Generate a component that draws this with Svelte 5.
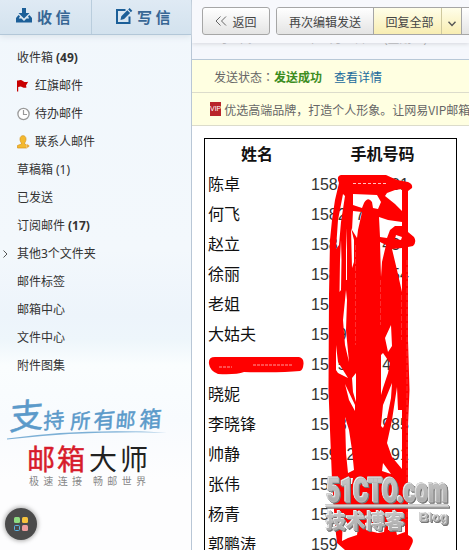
<script>
  // blanks are figure spaces, as wide as one digit
  const contacts = [
    { name: '陈卓', phone: '1582_____01' },
    { name: '何飞', phone: '1582_7' },
    { name: '赵立', phone: '158_____43' },
    { name: '徐丽', phone: '158______54' },
    { name: '老姐', phone: '15' },
    { name: '大姑夫', phone: '15_9' },
    { name: '', phone: '15_5____4' },
    { name: '晓妮', phone: '15' },
    { name: '李晓锋', phone: '15_8____985' },
    { name: '帅静', phone: '159_2____91' },
    { name: '张伟', phone: '15' },
    { name: '杨青', phone: '15' },
    { name: '郭鹏涛', phone: '159_4' }
  ];

  const folders = [
    { label: '收件箱', count: 49, bold: true },
    { label: '红旗邮件', icon: 'flag' },
    { label: '待办邮件', icon: 'clock' },
    { label: '联系人邮件', icon: 'person' },
    { label: '草稿箱', count: 1 },
    { label: '已发送' },
    { label: '订阅邮件', count: 17, bold: true },
    { label: '其他3个文件夹', more: true },
    { label: '邮件标签' },
    { label: '邮箱中心' },
    { label: '文件中心' },
    { label: '附件图集' }
  ];

  const pad = (s) => s.replaceAll('_', '\u2007');
</script>

<div class="page">
  <aside class="side">
    <div class="tabs">
      <div class="tab">
        <svg width="18" height="18" viewBox="0 0 18 18">
          <path d="M7 1h4v5h3.500L9 11.500 3.500 6H7z" fill="#1c5f98" />
          <path d="M3.500 8 1 11v4.500h16V11l-2.500-3-1.500 1.300 1.200 2.200h-2.700L9 14l-2.500-2.500H3.800L5 9.300z" fill="#1c5f98" />
        </svg>
        <span>收 信</span>
      </div>
      <div class="tab second">
        <svg width="18" height="18" viewBox="0 0 18 18">
          <path d="M10.500 3H2v13h12.500V9.500" fill="none" stroke="#1c5f98" stroke-width="2" />
          <path d="M5.500 13l.8-3.700 6-6 2.800 2.800-6 6zM13.200 2.400l1.400-1.400 2.700 2.700-1.400 1.500z" fill="#1c5f98" />
        </svg>
        <span>写 信</span>
      </div>
    </div>
    <ul class="folders">
      {#each folders as f}
        <li>
          <span class="arrow">
            {#if f.more}
              <svg width="5" height="8" viewBox="0 0 5 8"><path d="M.5.5 4 4 .5 7.500" fill="none" stroke="#555" /></svg>
            {/if}
          </span>
          {#if f.icon}
            <span class="ico">
              {#if f.icon === 'flag'}
                <svg width="14" height="14" viewBox="0 0 14 14"><path d="M0 1.500h1.200c2-1 3.500-.5 5 .7 1.400 1 2.800 1 5 .6L9 6.500l.5 2C7 9.500 5 7.800 3.500 7.500L1.200 8v4.500H0z" fill="#c80000" /></svg>
              {:else if f.icon === 'clock'}
                <svg width="14" height="14" viewBox="0 0 14 14"><circle cx="6.500" cy="7" r="5.600" fill="#fff" stroke="#999" stroke-width="1.300" /><path d="M6.500 3v4.500H10" fill="none" stroke="#999" stroke-width="1.200" /></svg>
              {:else}
                <svg width="14" height="14" viewBox="0 0 14 14"><path d="M3 4c0-4.500 6-4.500 6 0 0 2-.8 3-1.400 4v1l2.400 1V13H.5v-2.500L4.500 9V8C3.600 7 3 6 3 4z" fill="#f4b92e" stroke="#d6941b" stroke-width=".7" /><path d="M9.800 8.500 13 11l-3.200 2.500z" fill="#e39a1c" stroke="#fff" stroke-width=".5" /></svg>
              {/if}
            </span>
          {/if}
          <span>{f.label}</span>
          {#if f.count}<span class="count" class:bold={f.bold}>({f.count})</span>{/if}
        </li>
      {/each}
    </ul>
    <svg class="promo" width="191" height="110" viewBox="0 385 191 110">
      <g fill="#5b9aca" stroke="#5b9aca" stroke-width=".5">
        <text transform="translate(9 430) rotate(-5) skewX(-8)" font-size="34">支</text>
        <text transform="translate(43 429) rotate(-5) skewX(-8)" font-size="21">持</text>
        <text transform="translate(70 429) rotate(-4) skewX(-8)" font-size="20">所</text>
        <text transform="translate(93 429) rotate(-5) skewX(-8)" font-size="22">有</text>
        <text transform="translate(115 428) rotate(-3) skewX(-8)" font-size="20">邮</text>
        <text transform="translate(139 428) rotate(-4) skewX(-8)" font-size="22">箱</text>
      </g>
      <path d="M7 438.500Q80 428 167 432.500 80 430.500 7 439.500z" fill="#7db0d6" />
      <text x="27" y="470" font-size="28" textLength="58" fill="#d71c2b" stroke="#d71c2b" stroke-width=".5">邮箱</text>
      <text x="89" y="470" font-size="28" textLength="59" fill="#222">大师</text>
      <text x="29" y="485" font-size="10" textLength="53" fill="#888">极速连接</text>
      <text x="93" y="485" font-size="10" textLength="53" fill="#888">畅邮世界</text>
    </svg>
    <div class="apps"><i></i><i></i><i></i><i></i></div>
  </aside>

  <main>
    <div class="toolbar">
      <button class="btn back">
        <svg width="12" height="10" viewBox="0 0 12 10"><path d="M5.500.5 1 5l4.500 4.500M11 .5 6.500 5 11 9.500" fill="none" stroke="#666" /></svg>返回
      </button>
      <div class="group">
        <button class="edit">再次编辑发送</button>
        <button class="yellow all">回复全部</button>
        <button class="yellow drop" aria-label="more"><svg width="8" height="6" viewBox="0 0 8 6"><path d="M.5.8 4 4.500 7.500.8" fill="none" stroke="#555" stroke-width="1.400" /></svg></button>
        <button class="next" aria-label="next"></button>
      </div>
    </div>
    <div class="meta"><span>时　间：　　　　年　月　日</span><span class="week">(星期三)</span></div>
    <div class="notice">发送状态<span class="colon">：</span><b>发送成功</b><a href="#detail">查看详情</a></div>
    <div class="notice ad"><span class="vip">VIP</span>优选高端品牌，打造个人形象。让网易VIP邮箱</div>
    <div class="table">
      <div class="row head"><span class="name">姓名</span><span class="phone">手机号码</span></div>
      {#each contacts as c}
        <div class="row"><span class="name">{c.name}</span><span class="phone">{pad(c.phone)}</span></div>
      {/each}
    </div>
  </main>

  <svg class="ink" width="469" height="550" viewBox="0 0 469 550">
    <defs>
      <linearGradient id="metal" x1="0" y1="0" x2="0" y2="1">
        <stop offset="0" stop-color="#cfcfcf" />
        <stop offset="1" stop-color="#a2a2a2" />
      </linearGradient>
    </defs>
    <path fill="#f00" d="M215 357H299Q304 358 303.500 364T300 371Q280 373 244 372 236 375 218 374 210 371 209 364 208 357 215 357z" />
    <path d="M253 365h40M219 367h13" stroke="#ff9a9a" stroke-width="1" stroke-dasharray="3 1" />
    <path fill="#f00" fill-rule="evenodd" d="
      M341 175H386L397 180 408 182Q413 184 412 188L408 191V232L414 237Q417 242 413 246L408 247V340L409.500 390 408 425V535Q415 538 412 544L409 550H345L337 543 335 525 332 480 330 430 328.500 390 329 295 330 240 332 220 335 200 339 183Q336 176 341 175z
      M353 194 377 195 381 202 378 209 373 208 372 202Q368 196 364 203L362 208 353 205z
      M387 193 395 190 402 189V211L395 204 385 196z
      M353 211 362 212 358 230 357 238 352 230z
      M379 217 388 220 402 222V226L395 226 390 230 387 238 380 237z
      M396 235 402 237 401 240 395 239z
      M380 242 386 245 382 262 381 277z
      M392 249 402 248V292L397 270z
      M343 194 345 196 341 222 339 245 336 249 338 220z
      M351 228 354 240 354 262 352 268z
      M341 240 341.500 260 341 290 339.500 292 340 260z
      M346 228 347 250 347 280 346 280z
      M346 290 347 300 346 330 349 362 345 345 343 320z
      M336 345 338 362 343 370 348 378 338 373 336 370z
      M352 378 356 373 356 402 353 392z
      M345 384 355 405 355 411 349 400z
      M383 353 390 363 388 373 383 388 381 395V355z
      M391 325 392 346 388 352 385 338z
      M392 383 391 398 387 418 383 428 381 426 383 405z
      M397 387 398 410 402 410V469L392 457 387 443 392 420z
      M345 417 349 430 352 450 354 470 348 473 346 453z
      M383 463 391 474 382 471z
      M345 478 353 478 352 484 346 484z
      M343 517 350 527 358 528 357 535 348 538 342 541z
      M365 523 371 521 373 527 385 524 384 532 378 533 366 530z
      M394 521 405 526V532L397 535z" />
    <path d="M353 183.500h33" stroke="#ffc0c0" stroke-dasharray="3 2" />
    <path d="M355.500 245V345M380.500 280V325M401.500 295V340M407 260V520" stroke="#ff9c9c" stroke-width=".5" stroke-dasharray="5 2" opacity=".6" />

    <g class="mark" fill="url(#metal)">
      <text class="wm" x="327" y="502" font-size="33" textLength="121" lengthAdjust="spacingAndGlyphs">51CTO.com</text>
      <path d="M326 506.500H449" stroke="#c4c4c4" stroke-width="2" />
      <text class="cjk" x="326" y="529" font-size="20" textLength="79">技术博客</text>
      <text class="blog" x="419.500" y="521.500" font-size="13" textLength="29">Blog</text>
    </g>
  </svg>
</div>

<style>
  :global(body) {
    overflow: hidden;
  }
  .page {
    position: relative;
    display: flex;
    width: 469px;
    height: 550px;
    overflow: hidden;
    background: #fff;
    font: 12px 'Noto Sans', 'Noto Sans CJK SC', sans-serif;
    color: #333;
  }
  .side {
    position: relative;
    width: 191px;
    flex: none;
    border-right: 1px solid #b9c7d6;
    background: linear-gradient(#f1f7fc 0, #f3f8fc 250px, #edf4fb 315px, #eef6fb 340px, #fafdfe 365px, #f8fbfe 420px, #fdfdfe 480px);
  }
  .tabs {
    display: flex;
    height: 34px;
    border-bottom: 1px solid #b3c7d8;
    background: linear-gradient(#dfeaf4, #d3e2ee);
    box-shadow: 0 2px 6px #dce4eb;
  }
  .tab {
    display: flex;
    align-items: center;
    width: 76px;
    padding: 0 0 2px 15px;
    gap: 4px;
    font: bold 15px 'Noto Sans CJK SC', sans-serif;
    color: #386795;
    white-space: nowrap;
  }
  .tab.second {
    padding-left: 23px;
    border-left: 1px solid #b9cddd;
  }
  .folders {
    list-style: none;
    margin: 9px 0 0;
    padding: 0;
  }
  .folders li {
    display: flex;
    align-items: center;
    height: 28px;
    line-height: 28px;
  }
  .arrow {
    width: 14px;
    padding-left: 3px;
    line-height: 8px;
  }
  .ico {
    display: flex;
    width: 18px;
  }
  .count {
    margin-left: 3px;
  }
  .bold {
    font-weight: bold;
  }
  .promo {
    display: block;
    margin-top: 5px;
    font-family: 'Noto Sans CJK SC', sans-serif;
  }
  .apps {
    position: absolute;
    left: 5px;
    top: 508px;
    display: grid;
    grid-template-columns: 6px 6px;
    grid-auto-rows: 6px;
    gap: 2px;
    place-content: center;
    width: 32px;
    height: 32px;
    border-radius: 50%;
    background: #4b4b4b;
    box-shadow: 0 0 4px 1px #aaa;
  }
  .apps i {
    border-radius: 1.500px;
    background: #8fdc82;
  }
  .apps i:nth-child(2) {
    background: #f8c33d;
  }
  .apps i:nth-child(3) {
    background: none;
    border: 1px solid #5bb4e5;
  }
  .apps i:nth-child(4) {
    background: #ed9d9d;
  }

  main {
    flex: 1;
    min-width: 0;
    overflow: hidden;
  }
  .toolbar {
    position: relative;
    display: flex;
    box-sizing: border-box;
    height: 43px;
    padding: 7px 0 0 10px;
    gap: 6px;
    background: #f7f8fc;
    box-shadow: 0 1px 4px #d5d7dd;
  }
  button {
    flex: none;
    box-sizing: border-box;
    height: 26px;
    margin: 0;
    padding: 0;
    border: 0;
    background: linear-gradient(#fff, #e4e4e4);
    font: 12px 'Noto Sans CJK SC', sans-serif;
    color: #444;
  }
  .btn {
    display: flex;
    align-items: center;
    justify-content: center;
    gap: 5px;
    width: 68px;
    height: 28px;
    border: 1px solid #a6a6a6;
    border-radius: 3px;
  }
  .group {
    display: flex;
    flex: none;
    height: 26px;
    border: 1px solid #a6a6a6;
    border-radius: 3px;
    overflow: hidden;
  }
  .edit {
    width: 96px;
  }
  .yellow {
    border-left: 1px solid #a6a6a6;
    background: linear-gradient(#fffee9, #f8edb2);
  }
  .all {
    width: 68px;
    padding-left: 4px;
  }
  .drop {
    width: 20px;
    border-left-color: #cfc99f;
  }
  .next {
    width: 30px;
    border-left: 1px solid #a6a6a6;
  }
  .meta {
    display: flex;
    height: 16px;
    overflow: hidden;
    padding-left: 24px;
    border-bottom: 1px solid #b8c8d7;
    background: #f5f7fc;
    line-height: 16px;
    color: #888;
  }
  .meta span {
    margin-top: -12px;
    white-space: nowrap;
  }
  .week {
    margin-left: 18px;
  }
  .notice {
    height: 32px;
    padding-left: 24px;
    border-bottom: 1px solid #dcdccb;
    background: #ffffe1;
    line-height: 33px;
    white-space: nowrap;
    color: #666;
    font-family: 'Noto Sans CJK SC', sans-serif;
  }
  .notice:not(.ad) {
    padding-left: 22px;
  }
  .colon {
    font-family: 'Noto Sans CJK TC', sans-serif;
  }
  .notice b {
    color: #3c8d1f;
  }
  .notice a {
    margin-left: 12px;
    color: #1a6a9c;
    text-decoration: none;
  }
  .ad {
    display: flex;
    align-items: center;
    padding-left: 18px;
  }
  .vip {
    width: 14px;
    height: 14px;
    margin-right: 3px;
    background: #b9252b;
    color: #fff;
    font: 7px/14px 'Liberation Sans', sans-serif;
    text-align: center;
  }
  .table {
    width: 251px;
    height: 450px;
    margin: 12px 0 0 12px;
    border: 1px solid #000;
    font: 16px 'Liberation Sans', 'Noto Sans CJK SC', sans-serif;
    color: #111;
  }
  .row {
    display: flex;
    height: 30px;
    line-height: 32px;
  }
  .name {
    box-sizing: border-box;
    width: 104px;
    padding-left: 3px;
  }
  .phone {
    padding-left: 2px;
    white-space: pre;
    color: #333;
  }
  .head {
    font-weight: bold;
  }
  .head .name,
  .head .phone {
    padding: 0;
    text-align: center;
    color: #111;
  }
  .head .phone {
    flex: 1;
  }
  .ink {
    position: absolute;
    left: 0;
    top: 0;
    pointer-events: none;
  }
  .mark {
    filter: drop-shadow(-0.5px -0.5px 0 #eee) drop-shadow(1px 1px 0 #777) drop-shadow(0.700px 0.700px 0 #666);
  }
  .wm {
    font-family: Roboto, 'Liberation Sans', sans-serif;
    font-weight: 900;
    stroke: #b9b9b9;
    stroke-width: 1px;
  }
  .blog {
    font-family: 'Liberation Sans', sans-serif;
    font-weight: bold;
  }
  .cjk {
    font-family: 'Noto Sans CJK SC', sans-serif;
    font-weight: 900;
  }
</style>
